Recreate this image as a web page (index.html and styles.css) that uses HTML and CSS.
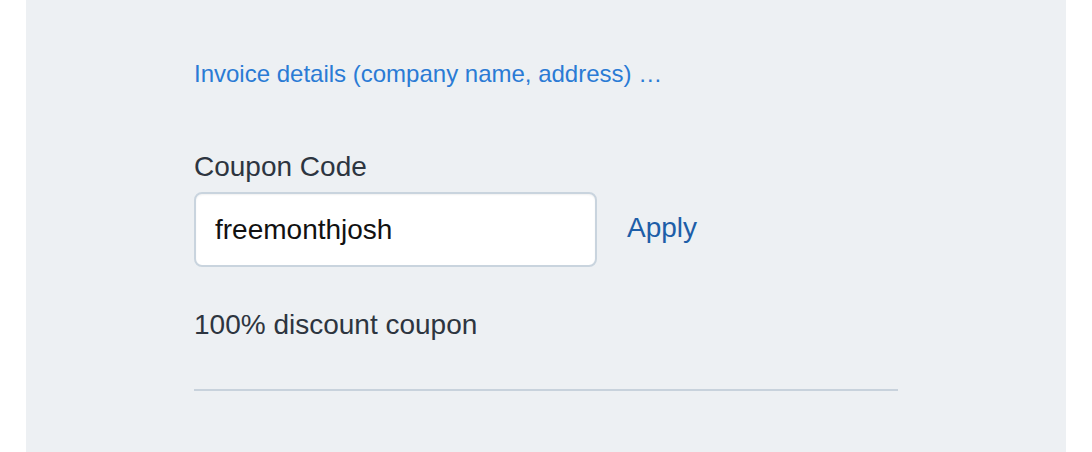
FILE: index.html
```html
<!DOCTYPE html>
<html lang="en">
<head>
  <meta charset="UTF-8">
  <meta name="viewport" content="width=device-width, initial-scale=1.0">
  <title>Checkout</title>
  <link rel="stylesheet" href="styles.css">
</head>
<body>
  <div class="panel">
    <a class="invoice-link" href="#">Invoice details (company name, address) …</a>

    <div class="coupon">
      <label class="coupon-label" for="coupon">Coupon Code</label>
      <div class="coupon-row">
        <input id="coupon" class="coupon-input" type="text" value="freemonthjosh">
        <a class="apply" href="#">Apply</a>
      </div>
      <p class="coupon-note">100% discount coupon</p>
    </div>

    <hr class="divider">
  </div>
</body>
</html>
```

FILE: styles.css
```css
body {
  font-family: "Liberation Sans", Arial, sans-serif;
  background-color: #fff;
  margin: 0;
  padding: 0;
}
.panel {
  margin-left: 26px;
  width: 1040px;
  height: 452px;
  box-sizing: border-box;
  padding: 58px 0 0 168px;
  background-color: #edf0f3;
}
.invoice-link {
  display: block;
  font-size: 24px;
  line-height: 32px;
  color: #2a7bd5;
  text-decoration: none;
}
.coupon {
  margin-top: 60px;
}
.coupon-label {
  display: block;
  font-size: 28px;
  line-height: 34px;
  color: #2d3540;
}
.coupon-row {
  display: flex;
  align-items: center;
  gap: 30px;
  margin-top: 8px;
}
.coupon-input {
  width: 403px;
  height: 75px;
  box-sizing: border-box;
  padding: 0 19px;
  border: 2px solid #c9d4de;
  border-radius: 8px;
  background-color: #fff;
  box-shadow: inset 0 1px 2px rgba(0, 0, 0, 0.06);
  font-family: inherit;
  font-size: 28px;
  color: #111;
  outline: none;
}
.apply {
  margin-bottom: 4px;
  font-size: 28px;
  line-height: 34px;
  color: #1d5ea8;
  text-decoration: none;
}
.coupon-note {
  margin: 41px 0 0;
  font-size: 28px;
  line-height: 34px;
  color: #2d3540;
}
.divider {
  width: 704px;
  margin: 47px 0 0;
  border: none;
  border-top: 2px solid #c8d2dc;
}
```
